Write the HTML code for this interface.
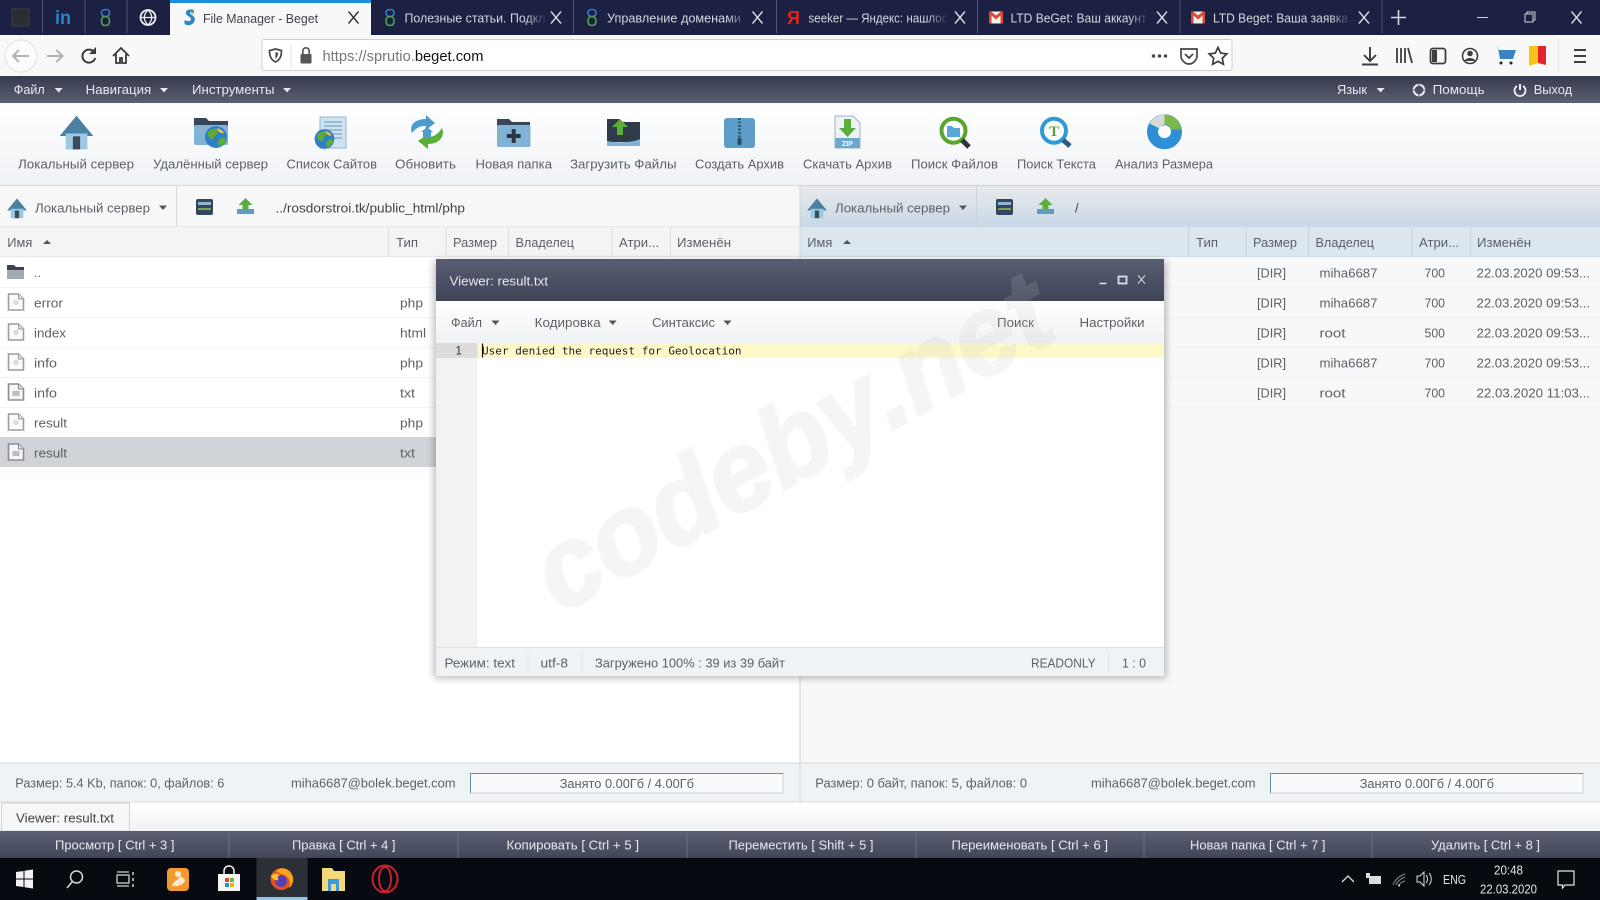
<!DOCTYPE html>
<html><head><meta charset="utf-8"><title>File Manager - Beget</title>
<style>
html,body{margin:0;padding:0;background:#fff;width:1600px;height:900px;overflow:hidden}
svg{display:block;filter:blur(.35px)}
text{font-family:"Liberation Sans","DejaVu Sans",sans-serif;font-size:13px;fill:#5d6167}
.tb text,text.tb{fill:#d4d6e0}
.lt{fill:#e8e9ee}
.d{fill:#3f4348}
.m{font-family:"DejaVu Sans Mono","Liberation Mono",monospace;font-size:11px;fill:#222}
</style></head><body>
<svg width="1600" height="900" viewBox="0 0 1600 900" xmlns="http://www.w3.org/2000/svg">
<defs>
<linearGradient id="menu" x1="0" y1="0" x2="0" y2="1"><stop offset="0" stop-color="#353a4e"/><stop offset="1" stop-color="#5a5f74"/></linearGradient>
<linearGradient id="title" x1="0" y1="0" x2="0" y2="1"><stop offset="0" stop-color="#585e73"/><stop offset="1" stop-color="#3f4457"/></linearGradient>
<linearGradient id="tool" x1="0" y1="0" x2="0" y2="1"><stop offset="0" stop-color="#fff"/><stop offset="1" stop-color="#eff2f5"/></linearGradient>
<linearGradient id="rhead" x1="0" y1="0" x2="0" y2="1"><stop offset="0" stop-color="#e9eaec"/><stop offset="1" stop-color="#c8d8e7"/></linearGradient>
<linearGradient id="fk" x1="0" y1="0" x2="0" y2="1"><stop offset="0" stop-color="#5a5f74"/><stop offset="1" stop-color="#41465a"/></linearGradient>
<linearGradient id="fade" x1="0" y1="0" x2="1" y2="0"><stop offset="0" stop-color="#1c2042" stop-opacity="0"/><stop offset="1" stop-color="#1c2042"/></linearGradient>
<filter id="sh" x="-5%" y="-5%" width="110%" height="110%"><feGaussianBlur stdDeviation="4"/></filter>
<g id="php"><path d="M0 0h10l5 5v11H0z" fill="#fafafa" stroke="#9a9da6" stroke-width="1.6"/><path d="M10 0v5h5" fill="#ddd" stroke="#9a9da6"/><path d="M5.5 8.5l2-2 2 2-2 2z" fill="none" stroke="#c5c8cd" stroke-width="1.2"/></g>
<g id="txt"><path d="M0 0h10l5 5v11H0z" fill="#f6f6f6" stroke="#8a8d96" stroke-width="1.6"/><path d="M10 0v5h5" fill="#ddd" stroke="#8a8d96"/><rect x="4" y="7" width="7" height="5" fill="#b9bcc3"/></g>
<g id="house"><path d="M-10 2L0-10 10 2z" fill="#4a80a0" stroke="#4a80a0" stroke-width="1.5"/><rect x="-7.5" y="1" width="15" height="11" fill="#9cc9e2"/><rect x="-2.5" y="3" width="5" height="9" fill="#3c4a5c"/></g>
<g id="x"><path d="M-5-6L5 6M5-6L-5 6" stroke-width="1.4" fill="none"/></g>
<g id="gm"><rect x="-7" y="-6" width="14" height="12" fill="#f5f0ec"/><path d="M-7-6V6h2.5V-2L0 2 4.5-2V6H7V-6H5L0-2-5-6z" fill="#d94a38"/></g>
<g id="s8"><path d="M0-1C-3-1-4-3-4-5S-3-8 0-8 4-7 4-5 3-1 0-1z" fill="none" stroke="#2f7fd0" stroke-width="1.6"/><path d="M0-1C3-1 4 1 4 3.5S3 8 0 8-4 6-4 3.5-3-1 0-1z" fill="none" stroke="#4aa845" stroke-width="1.6"/></g>
<g id="gb"><circle r="11" fill="#2f7fc6"/><path d="M-8-5C-4-9 0-9 2-7 3-3-2-2-2 2-5 3-9 0-8-5zM3 2C6 0 9 0 10 2 9 7 5 9 3 9 1 6 2 4 3 2z" fill="#5fa83c"/><path d="M1-9C4-8 7-6 8-4 5-3 2-5 1-9z" fill="#e8c93c"/></g>
<g id="car"><path d="M-4-2L0 2.5 4-2z"/></g>
</defs>

<!-- firefox tabs -->
<rect width="1600" height="35" fill="#1c2042"/>
<g stroke="#50546e" stroke-width="1"><path d="M42.5 0v33M85 0v33M127 0v33M573.5 0v33M776.5 0v33M977.5 0v33M1180 0v33M1382 0v33"/></g>
<rect x="12" y="9" width="17" height="17" fill="#2b2d33" stroke="#3b3d40"/>
<text x="55" y="24" style="font-size:19px;font-weight:bold;fill:#2a85c4" textLength="16" lengthAdjust="spacingAndGlyphs">in</text>
<use href="#s8" x="105.5" y="17.5"/>
<circle cx="148" cy="17.5" r="7.5" fill="none" stroke="#eee" stroke-width="1.8"/><path d="M140.5 17.5h15M148 10c-5 5-5 10 0 15M148 10c5 5 5 10 0 15" stroke="#eee" fill="none" stroke-width="1.3"/>
<rect x="170" y="0" width="201" height="35" fill="#f8f8f9"/><rect x="170" y="0" width="201" height="3" fill="#1e8fe0"/>
<path d="M194 10c-6-2-9 1-8 4 1 2 5 3 5 5s-3 3-6 1c-2 4 1 6 5 5 4-1 6-5 4-8-1-2-4-3-4-4s2-2 4 0z" fill="#2f86c6"/><path d="M194 10l-4 2 4 2z" fill="#6cb33f"/>
<text x="203" y="23" class="d" textLength="115" lengthAdjust="spacingAndGlyphs">File Manager - Beget</text>
<use href="#x" x="353.5" y="17.5" stroke="#333"/>
<g stroke="#d8dae2">
<use href="#s8" x="390" y="17.5" stroke="none"/>
<text x="404.5" y="22.5" class="tb" style="fill:#d4d6e0" textLength="141" lengthAdjust="spacingAndGlyphs" stroke="none">Полезные статьи. Подкл</text>
<rect x="526" y="5" width="21" height="26" fill="url(#fade)" stroke="none"/>
<use href="#x" x="556" y="17.5"/>
<use href="#s8" x="592" y="17.5" stroke="none"/>
<text x="607" y="22.5" class="tb" style="fill:#d4d6e0" textLength="134" lengthAdjust="spacingAndGlyphs" stroke="none">Управление доменами</text>
<rect x="728" y="5" width="19" height="26" fill="url(#fade)" stroke="none"/>
<use href="#x" x="757.5" y="17.5"/>
<text x="787" y="24" style="font-size:18px;fill:#e0241c;font-weight:bold" stroke="none">Я</text>
<text x="808.5" y="22.5" style="fill:#d4d6e0" textLength="139" lengthAdjust="spacingAndGlyphs" stroke="none">seeker — Яндекс: нашлос</text>
<rect x="928" y="5" width="21" height="26" fill="url(#fade)" stroke="none"/>
<use href="#x" x="960" y="17.5"/>
<use href="#gm" x="996" y="17.5" stroke="none"/>
<text x="1010.5" y="22.5" style="fill:#d4d6e0" textLength="136" lengthAdjust="spacingAndGlyphs" stroke="none">LTD BeGet: Ваш аккаунт</text>
<rect x="1129" y="5" width="20" height="26" fill="url(#fade)" stroke="none"/>
<use href="#x" x="1162" y="17.5"/>
<use href="#gm" x="1198" y="17.5" stroke="none"/>
<text x="1213" y="22.5" style="fill:#d4d6e0" textLength="135" lengthAdjust="spacingAndGlyphs" stroke="none">LTD Beget: Ваша заявка</text>
<rect x="1331" y="5" width="20" height="26" fill="url(#fade)" stroke="none"/>
<use href="#x" x="1364" y="17.5"/>
</g>
<path d="M1391 17.5h15M1398.5 10v15" stroke="#d8dae2" stroke-width="1.6"/>
<path d="M1477 17.5h11" stroke="#cfd1da" stroke-width="1"/>
<path d="M1525 14h8v8h-8zM1527 14v-2h8v8h-2" fill="none" stroke="#cfd1da"/>
<use href="#x" x="1576.5" y="17.5" stroke="#d8dae2"/>

<!-- firefox toolbar -->
<rect y="35" width="1600" height="41" fill="#f8f8f9"/>
<circle cx="21" cy="56" r="16" fill="#fbfbfb" stroke="#e0e0e2"/>
<path d="M29 56H13M19 50l-6 6 6 6" fill="none" stroke="#b0b1b5" stroke-width="2"/>
<path d="M47 56h15M56.5 50l6 6-6 6" fill="none" stroke="#b0b1b5" stroke-width="2"/>
<path d="M94 52a6.5 6.5 0 1 0 1.2 6" fill="none" stroke="#3a3a3f" stroke-width="2"/><path d="M96 47v7h-7z" fill="#3a3a3f"/>
<path d="M113 56l8-8 8 8M116 54v9h4v-5h2v5h4v-9" fill="none" stroke="#3a3a3f" stroke-width="1.8"/>
<rect x="262" y="39.5" width="970" height="31" rx="2" fill="#fff" stroke="#cfcfd2"/>
<path d="M275.5 49l6 1.5c0 5-1 9-6 11.5-5-2.5-6-6.5-6-11.5z" fill="none" stroke="#45454a" stroke-width="1.7"/><path d="M275.5 52l2.500.7c0 3-1 5-2.500 6z" fill="#45454a"/>
<path d="M291 44v24" stroke="#e0e0e2"/>
<rect x="300.5" y="54" width="11" height="9.5" rx="1" fill="#55555a"/><path d="M302.8 54v-3a3.2 3.2 0 0 1 6.4 0v3" fill="none" stroke="#55555a" stroke-width="1.7"/>
<text x="322.5" y="61" style="font-size:14.5px;fill:#76767c" textLength="161" lengthAdjust="spacingAndGlyphs">https://sprutio.<tspan style="fill:#111">beget.com</tspan></text>
<g fill="#4a4a50"><circle cx="1153.5" cy="56" r="1.8"/><circle cx="1159.5" cy="56" r="1.8"/><circle cx="1165.5" cy="56" r="1.8"/></g>
<path d="M1181 49h16v7c0 4-4 8-8 8s-8-4-8-8z" fill="none" stroke="#45454a" stroke-width="1.7"/><path d="M1185 54l4 4 4-4" fill="none" stroke="#45454a" stroke-width="1.8"/>
<path d="M1218 47.5l2.7 5.6 6.1.8-4.500 4.300 1.100 6.100-5.400-2.900-5.400 2.900 1.100-6.100-4.500-4.300 6.100-.8z" fill="none" stroke="#3d3d42" stroke-width="1.7"/>
<path d="M1370 47v14M1364 55l6 6 6-6M1362 64.5h16" fill="none" stroke="#3d3d42" stroke-width="1.9"/>
<path d="M1397 48v15M1401 48v15M1405 48v15M1408 48l4 15" fill="none" stroke="#3d3d42" stroke-width="1.8"/>
<rect x="1430.5" y="48.5" width="15" height="15" rx="2.5" fill="none" stroke="#3d3d42" stroke-width="1.8"/><rect x="1432" y="50" width="5" height="12" fill="#3d3d42"/>
<circle cx="1470" cy="56" r="7.5" fill="none" stroke="#3d3d42" stroke-width="1.6"/><circle cx="1470" cy="53.5" r="2.8" fill="#3d3d42"/><path d="M1464.5 61c2-4 9-4 11 0z" fill="#3d3d42"/>
<path d="M1496 46l2 2 2 11h13l3-9h-17" fill="#3b83c4"/><circle cx="1501" cy="63" r="1.5" fill="#222"/><circle cx="1511" cy="63" r="1.5" fill="#222"/>
<path d="M1529 46h9v17l-9 3z" fill="#f5c518"/><path d="M1538 46h8v19l-8-2z" fill="#e0262c"/>
<path d="M1558.7 39v33" stroke="#e6e6e8"/>
<path d="M1574 50h12M1574 56h12M1574 62h12" stroke="#3d3d42" stroke-width="2"/>

<!-- app menu -->
<rect y="76" width="1600" height="27" fill="url(#menu)"/>
<g fill="#e6e7ec">
<text x="13.8" y="94" class="lt" textLength="31" lengthAdjust="spacingAndGlyphs">Файл</text><use href="#car" x="58.7" y="90"/>
<text x="85.7" y="94" class="lt" textLength="65.5" lengthAdjust="spacingAndGlyphs">Навигация</text><use href="#car" x="164" y="90"/>
<text x="192" y="94" class="lt" textLength="82.5" lengthAdjust="spacingAndGlyphs">Инструменты</text><use href="#car" x="287" y="90"/>
<text x="1337" y="94" class="lt" textLength="30" lengthAdjust="spacingAndGlyphs">Язык</text><use href="#car" x="1380.6" y="90"/>
<text x="1432.6" y="94" class="lt" textLength="52" lengthAdjust="spacingAndGlyphs">Помощь</text>
<text x="1533.7" y="94" class="lt" textLength="38.5" lengthAdjust="spacingAndGlyphs">Выход</text>
</g>
<circle cx="1419" cy="90" r="5.3" fill="none" stroke="#eceef2" stroke-width="2"/><path d="M1419 84v12M1413 90h12" stroke="#50556a" stroke-width="1"/>
<path d="M1517 86a5.5 5.5 0 1 0 6 0" fill="none" stroke="#f0f1f4" stroke-width="1.8"/><path d="M1520 84v6" stroke="#f0f1f4" stroke-width="2"/>

<!-- tool area -->
<rect y="103" width="1600" height="82" fill="url(#tool)"/>
<g class="tbar">
<use href="#house" transform="translate(76.5,132) scale(1.45)"/>
<text x="18" y="168.5" textLength="116" lengthAdjust="spacingAndGlyphs">Локальный сервер</text>
<!-- remote -->
<path d="M194 118h12l3 3h19v16h-34z" fill="#3a4658"/><rect x="194" y="125" width="34" height="20" rx="2" fill="#82b3d6"/><use href="#gb" transform="translate(216,137)"/>
<text x="153" y="168.5" textLength="115" lengthAdjust="spacingAndGlyphs">Удалённый сервер</text>
<!-- list -->
<rect x="320" y="117" width="26" height="31" fill="#cfe2ef" stroke="#8fb6d0"/><path d="M324 122h18M324 126h18M324 130h18M324 134h18M324 138h18" stroke="#88aec8" stroke-width="1.6"/><use href="#gb" transform="translate(324.5,139) scale(.9)"/>
<text x="286.5" y="168.5" textLength="90.5" lengthAdjust="spacingAndGlyphs">Список Сайтов</text>
<!-- refresh -->
<path d="M412 133c-3-7 2-14 14-14v-4l9 8-9 7v-4c-6 0-9 1-14 7z" fill="#4e9ccf"/><path d="M442 128c3 8-2 16-14 16v5l-10-8 10-7v3c6 0 10-3 14-9z" fill="#5cae3c"/><path d="M427 127l6 5h-2v5h-8v-5h-2z" fill="#4e9ccf"/>
<text x="395" y="168.5" textLength="61" lengthAdjust="spacingAndGlyphs">Обновить</text>
<!-- new folder -->
<path d="M497 119h12l3 3h18v12h-33z" fill="#3a4658"/><rect x="497" y="125" width="33.5" height="22" rx="2" fill="#82b3d6"/><path d="M513.7 129v14M506.7 136h14" stroke="#2c3746" stroke-width="4"/>
<text x="475.5" y="168.5" textLength="76.5" lengthAdjust="spacingAndGlyphs">Новая папка</text>
<!-- upload -->
<path d="M607 119h12l3 3h18v20h-33z" fill="#2f3a4a"/><path d="M607 141c8 2 25 2 33-2v7h-33z" fill="#82b3d6"/><path d="M617 135v-8h-5l8-8 8 8h-5v8z" fill="#5cae3c"/>
<text x="570" y="168.5" textLength="106.5" lengthAdjust="spacingAndGlyphs">Загрузить Файлы</text>
<!-- archive -->
<rect x="724" y="118" width="31" height="30" rx="3" fill="#5d9dc8"/><path d="M739.5 118v24" stroke="#2d5e80" stroke-width="3" stroke-dasharray="2 1.5"/><rect x="737.5" y="138" width="4" height="7" rx="1.5" fill="#2d4a60"/>
<text x="695" y="168.5" textLength="89" lengthAdjust="spacingAndGlyphs">Создать Архив</text>
<!-- zip -->
<path d="M835 116h18l7 7v25h-25z" fill="#eef2f4" stroke="#9db4c4"/><rect x="835.5" y="138" width="24" height="10" fill="#6da7cc"/><path d="M844 119h7v9h5l-8.5 9-8.5-9h5z" fill="#5cae3c"/>
<text x="842" y="146" style="font-size:7px;font-weight:bold;fill:#fff">ZIP</text>
<text x="803" y="168.5" textLength="89" lengthAdjust="spacingAndGlyphs">Скачать Архив</text>
<!-- search files -->
<circle cx="953.5" cy="130.7" r="12" fill="#fff" stroke="#5aa531" stroke-width="4"/><path d="M962 140l7 7" stroke="#2c3440" stroke-width="5"/><path d="M947 126h5l2 2h6v9h-13z" fill="#58a8dc"/>
<text x="911" y="168.5" textLength="87" lengthAdjust="spacingAndGlyphs">Поиск Файлов</text>
<!-- search text -->
<circle cx="1054" cy="130.7" r="12" fill="#fff" stroke="#2f9ad8" stroke-width="4"/><path d="M1063 140l7 6" stroke="#345a80" stroke-width="5"/><text x="1049" y="136" style="font-size:15px;font-weight:bold;fill:#5aa531;font-family:'Liberation Serif',serif">T</text>
<text x="1017" y="168.5" textLength="79" lengthAdjust="spacingAndGlyphs">Поиск Текста</text>
<!-- pie -->
<circle cx="1164.5" cy="131.7" r="12" fill="none" stroke="#2f8fd6" stroke-width="11"/><path d="M1164.5 114.5a17.2 17.2 0 0 1 17 15h-11a6 6 0 0 0-6-5z" fill="#7cb84a"/><path d="M1164.5 114.5a17.2 17.2 0 0 0-15 9l10 5a6 6 0 0 1 5-4z" fill="#d8d8d8"/>
<text x="1115" y="168.5" textLength="98" lengthAdjust="spacingAndGlyphs">Анализ Размера</text>
</g>

<!-- left panel -->
<rect y="185" width="800" height="42" fill="#f7f7f7"/>
<path d="M0 185.500h800M176.500 185v42M0 227h800" stroke="#d9d9d9"/>
<use href="#house" transform="translate(17,208) scale(.85)"/>
<text x="35" y="212.5" textLength="115" lengthAdjust="spacingAndGlyphs">Локальный сервер</text><use href="#car" x="163" y="207.5" fill="#555"/>
<g id="drv"><rect x="196" y="199" width="17" height="16" rx="2" fill="#33465c"/><rect x="198" y="202" width="13" height="3" fill="#8fb6d4"/><rect x="198" y="208" width="13" height="2" fill="#7c9f5a"/></g>
<g id="upl"><path d="M237 214v-5h17v5z" fill="#5f9dc4"/><path d="M242.5 209v-4h-4l7-7 7 7h-4v4z" fill="#5cae3c"/></g>
<text x="275.5" y="212.5" class="d" textLength="189.5" lengthAdjust="spacingAndGlyphs">../rosdorstroi.tk/public_html/php</text>
<rect y="227" width="800" height="30" fill="#f4f4f4"/>
<path d="M0 257h800M388.500 227v30M446 227v30M508.500 227v30M612 227v30M670.500 227v30" stroke="#dedede"/>
<text x="7.3" y="247" textLength="25" lengthAdjust="spacingAndGlyphs">Имя</text><path d="M43 244l4-4 4 4z" fill="#555"/>
<text x="396" y="247" textLength="22" lengthAdjust="spacingAndGlyphs">Тип</text>
<text x="453" y="247" textLength="44" lengthAdjust="spacingAndGlyphs">Размер</text>
<text x="515.5" y="247" textLength="58.5" lengthAdjust="spacingAndGlyphs">Владелец</text>
<text x="619" y="247" textLength="40" lengthAdjust="spacingAndGlyphs">Атри...</text>
<text x="677" y="247" textLength="54" lengthAdjust="spacingAndGlyphs">Изменён</text>
<rect y="257" width="800" height="506" fill="#fff"/>
<rect y="437" width="800" height="30" fill="#d0d3d8"/>
<path d="M0 287.500h800M0 317.500h800M0 347.500h800M0 377.500h800M0 407.500h800" stroke="#f3f3f3"/>
<path d="M7 265h7l2 2h8v12H7z" fill="#3d4352"/><rect x="7" y="270" width="17" height="9" fill="#a4a9b4"/>
<text x="34" y="277" textLength="7" lengthAdjust="spacingAndGlyphs">..</text>
<use href="#php" x="8.5" y="294"/><text x="34" y="307.5" textLength="29" lengthAdjust="spacingAndGlyphs">error</text><text x="400" y="307.5" textLength="23" lengthAdjust="spacingAndGlyphs">php</text>
<use href="#php" x="8.5" y="324"/><text x="34" y="337.5" textLength="32" lengthAdjust="spacingAndGlyphs">index</text><text x="400" y="337.5" textLength="26" lengthAdjust="spacingAndGlyphs">html</text>
<use href="#php" x="8.5" y="354"/><text x="34" y="367.5" textLength="23" lengthAdjust="spacingAndGlyphs">info</text><text x="400" y="367.5" textLength="23" lengthAdjust="spacingAndGlyphs">php</text>
<use href="#txt" x="8.5" y="384"/><text x="34" y="397.5" textLength="23" lengthAdjust="spacingAndGlyphs">info</text><text x="400" y="397.5" textLength="15" lengthAdjust="spacingAndGlyphs">txt</text>
<use href="#php" x="8.5" y="414"/><text x="34" y="427.5" textLength="33" lengthAdjust="spacingAndGlyphs">result</text><text x="400" y="427.5" textLength="23" lengthAdjust="spacingAndGlyphs">php</text>
<use href="#txt" x="8.5" y="444"/><text x="34" y="457.5" textLength="33" lengthAdjust="spacingAndGlyphs">result</text><text x="400" y="457.5" textLength="15" lengthAdjust="spacingAndGlyphs">txt</text>

<!-- right panel -->
<rect x="800" y="185" width="800" height="42" fill="url(#rhead)"/>
<path d="M800 185.500h800M976.500 185v42" stroke="#cdd2d6"/>
<use href="#house" transform="translate(817,208) scale(.85)"/>
<text x="835" y="212.5" textLength="115" lengthAdjust="spacingAndGlyphs">Локальный сервер</text><use href="#car" x="963" y="207.5" fill="#555"/>
<use href="#drv" x="800"/><use href="#upl" x="800"/>
<text x="1075" y="212.5" class="d">/</text>
<rect x="800" y="227" width="800" height="30" fill="#dce6ef"/>
<path d="M800 257h800M1188.500 227v30M1246 227v30M1308.500 227v30M1412 227v30M1470.500 227v30" stroke="#c9d3db"/>
<text x="807.3" y="247" textLength="25" lengthAdjust="spacingAndGlyphs">Имя</text><path d="M843 244l4-4 4 4z" fill="#555"/>
<text x="1196" y="247" textLength="22" lengthAdjust="spacingAndGlyphs">Тип</text>
<text x="1253" y="247" textLength="44" lengthAdjust="spacingAndGlyphs">Размер</text>
<text x="1315.5" y="247" textLength="58.5" lengthAdjust="spacingAndGlyphs">Владелец</text>
<text x="1419" y="247" textLength="40" lengthAdjust="spacingAndGlyphs">Атри...</text>
<text x="1477" y="247" textLength="54" lengthAdjust="spacingAndGlyphs">Изменён</text>
<rect x="800" y="257" width="800" height="506" fill="#f6f8fa"/>
<path d="M800 287.500h800M800 317.500h800M800 347.500h800M800 377.500h800M800 407.500h800" stroke="#f1f3f5"/>
<path d="M800 185v617" stroke="#cfd2d6"/>
<g>
<text x="1257" y="277.5" textLength="29" lengthAdjust="spacingAndGlyphs">[DIR]</text><text x="1319.5" y="277.5" textLength="58" lengthAdjust="spacingAndGlyphs">miha6687</text><text x="1424.5" y="277.5" textLength="20.5" lengthAdjust="spacingAndGlyphs">700</text><text x="1476.5" y="277.5" textLength="113.5" lengthAdjust="spacingAndGlyphs">22.03.2020 09:53...</text>
<text x="1257" y="307.5" textLength="29" lengthAdjust="spacingAndGlyphs">[DIR]</text><text x="1319.5" y="307.5" textLength="58" lengthAdjust="spacingAndGlyphs">miha6687</text><text x="1424.5" y="307.5" textLength="20.5" lengthAdjust="spacingAndGlyphs">700</text><text x="1476.5" y="307.5" textLength="113.5" lengthAdjust="spacingAndGlyphs">22.03.2020 09:53...</text>
<text x="1257" y="337.5" textLength="29" lengthAdjust="spacingAndGlyphs">[DIR]</text><text x="1319.5" y="337.5" textLength="26" lengthAdjust="spacingAndGlyphs">root</text><text x="1424.5" y="337.5" textLength="20.5" lengthAdjust="spacingAndGlyphs">500</text><text x="1476.5" y="337.5" textLength="113.5" lengthAdjust="spacingAndGlyphs">22.03.2020 09:53...</text>
<text x="1257" y="367.5" textLength="29" lengthAdjust="spacingAndGlyphs">[DIR]</text><text x="1319.5" y="367.5" textLength="58" lengthAdjust="spacingAndGlyphs">miha6687</text><text x="1424.5" y="367.5" textLength="20.5" lengthAdjust="spacingAndGlyphs">700</text><text x="1476.5" y="367.5" textLength="113.5" lengthAdjust="spacingAndGlyphs">22.03.2020 09:53...</text>
<text x="1257" y="397.5" textLength="29" lengthAdjust="spacingAndGlyphs">[DIR]</text><text x="1319.5" y="397.5" textLength="26" lengthAdjust="spacingAndGlyphs">root</text><text x="1424.5" y="397.5" textLength="20.5" lengthAdjust="spacingAndGlyphs">700</text><text x="1476.5" y="397.5" textLength="113.5" lengthAdjust="spacingAndGlyphs">22.03.2020 11:03...</text>
</g>

<!-- status rows -->
<rect y="763" width="1600" height="39" fill="#f0f3f5"/>
<path d="M0 763h1600M0 802h1600M800 763v39" stroke="#d8dbde"/>
<text x="15.3" y="787.5" textLength="209" lengthAdjust="spacingAndGlyphs">Размер: 5.4 Kb, папок: 0, файлов: 6</text>
<text x="291" y="787.5" textLength="164.5" lengthAdjust="spacingAndGlyphs">miha6687@bolek.beget.com</text>
<rect x="470.5" y="773.5" width="312.5" height="19.5" fill="#f8fafb" stroke="#c7d3dc"/><path d="M470 773.500h313M470.500 773v20" stroke="#5e8fb5"/>
<text x="559.7" y="788" textLength="134.3" lengthAdjust="spacingAndGlyphs">Занято 0.00Гб / 4.00Гб</text>
<text x="815.3" y="787.5" textLength="211.7" lengthAdjust="spacingAndGlyphs">Размер: 0 байт, папок: 5, файлов: 0</text>
<text x="1091" y="787.5" textLength="164.5" lengthAdjust="spacingAndGlyphs">miha6687@bolek.beget.com</text>
<rect x="1270.5" y="773.5" width="312.5" height="19.5" fill="#f8fafb" stroke="#c7d3dc"/><path d="M1270 773.500h313M1270.500 773v20" stroke="#5e8fb5"/>
<text x="1359.7" y="788" textLength="134.3" lengthAdjust="spacingAndGlyphs">Занято 0.00Гб / 4.00Гб</text>

<!-- window tabs bar -->
<rect y="803" width="1600" height="28" fill="url(#tool)"/>
<rect x="1.5" y="803" width="128" height="28" fill="#f5f6f7" stroke="#d2d4d6"/>
<text x="16" y="822.5" class="d" textLength="98" lengthAdjust="spacingAndGlyphs">Viewer: result.txt</text>

<!-- function keys -->
<rect y="831" width="1600" height="27" fill="url(#fk)"/>
<path d="M229 832v26M458 832v26M687 832v26M916 832v26M1144 832v26M1372 832v26" stroke="#6a6f82"/>
<text x="55" y="849.5" class="lt" textLength="119.5" lengthAdjust="spacingAndGlyphs">Просмотр [ Ctrl + 3 ]</text>
<text x="292" y="849.5" class="lt" textLength="103.5" lengthAdjust="spacingAndGlyphs">Правка [ Ctrl + 4 ]</text>
<text x="506.5" y="849.5" class="lt" textLength="132.5" lengthAdjust="spacingAndGlyphs">Копировать [ Ctrl + 5 ]</text>
<text x="728.5" y="849.5" class="lt" textLength="145" lengthAdjust="spacingAndGlyphs">Переместить [ Shift + 5 ]</text>
<text x="951.5" y="849.5" class="lt" textLength="156.5" lengthAdjust="spacingAndGlyphs">Переименовать [ Ctrl + 6 ]</text>
<text x="1190" y="849.5" class="lt" textLength="135.5" lengthAdjust="spacingAndGlyphs">Новая папка [ Ctrl + 7 ]</text>
<text x="1431" y="849.5" class="lt" textLength="109" lengthAdjust="spacingAndGlyphs">Удалить [ Ctrl + 8 ]</text>

<!-- taskbar -->
<rect y="858" width="1600" height="42" fill="#070b11"/>
<path d="M16 872l7.5-1v7.5H16zM24.5 870.8L33 869.5v9h-8.5zM16 879.5h7.5v7.5L16 886zM24.5 879.5H33v9l-8.5-1.2z" fill="#f2f2f2"/>
<circle cx="76.5" cy="877" r="6" fill="none" stroke="#d8d8d8" stroke-width="1.5"/><path d="M72 882l-5 6" stroke="#d8d8d8" stroke-width="1.5"/>
<path d="M117 872h12M117 886h12" stroke="#cfcfcf" stroke-width="1.3"/><rect x="117" y="875" width="12" height="8" fill="none" stroke="#cfcfcf" stroke-width="1.3"/><path d="M133 872v3M133 878v3M133 884v3" stroke="#cfcfcf" stroke-width="1.5"/>
<rect x="167" y="868" width="22" height="23" rx="4" fill="#f29a2e"/><path d="M172 886c2-6 6-5 8-10 2 2 5 2 5 5-2 4-8 6-13 5z" fill="#fbe8d0"/><circle cx="178" cy="874" r="3" fill="#fbe8d0"/>
<path d="M218 874h22v17h-22z" fill="#f5f5f5"/><path d="M224 874v-3a5 5 0 0 1 10 0v3" fill="none" stroke="#f5f5f5" stroke-width="1.5"/><rect x="225" y="878" width="4" height="4" fill="#e0482c"/><rect x="230" y="878" width="4" height="4" fill="#72b62c"/><rect x="225" y="883" width="4" height="4" fill="#1f9ad6"/><rect x="230" y="883" width="4" height="4" fill="#f5b400"/>
<rect x="256.5" y="858" width="51" height="42" fill="#2b2f36"/><rect x="256.5" y="897" width="51" height="3" fill="#8ec5ea"/>
<circle cx="281.5" cy="879" r="11" fill="#e8501f"/><circle cx="281" cy="881" r="6" fill="#5a3fb0"/><path d="M276 871c6-5 14-3 17 6 1 4-1 9-4 11 2-5 0-10-3-12-2-2-6-2-10-5z" fill="#f7a51f"/><path d="M271 876c3-3 6-3 9-1-3 1-3 4-1 5-4 1-7-1-8-4z" fill="#f7c72c"/>
<path d="M322 868h10l2 3h11v20h-23z" fill="#f5d77c"/><rect x="328" y="879" width="11" height="12" fill="#3a9bdc"/><rect x="331" y="884" width="5" height="7" fill="#f5d77c"/>
<ellipse cx="385" cy="879" rx="12.5" ry="13.5" fill="none" stroke="#c8202c" stroke-width="2"/><ellipse cx="385" cy="879" rx="6" ry="12" fill="none" stroke="#c8202c" stroke-width="2"/>
<path d="M1342 882l6-6 6 6" fill="none" stroke="#dcdcdc" stroke-width="1.3"/>
<rect x="1369" y="876" width="12" height="8" fill="#dcdcdc"/><rect x="1366" y="873" width="4" height="5" fill="#dcdcdc"/>
<path d="M1393 885c2-5 6-9 12-11M1396 885c1-3 4-6 9-8M1399 885c1-2 3-3 6-4" fill="none" stroke="#8a8c90"/><circle cx="1399" cy="885.5" r="1" fill="#ddd"/>
<path d="M1417 876h3l4-4v14l-4-4h-3z" fill="none" stroke="#dcdcdc"/><path d="M1426 875c2 2 2 6 0 8M1429 873c3 3 3 9 0 12" fill="none" stroke="#dcdcdc"/>
<text x="1443" y="884" style="fill:#e2e2e2" textLength="23" lengthAdjust="spacingAndGlyphs">ENG</text>
<text x="1494" y="874.5" style="fill:#e2e2e2" textLength="29" lengthAdjust="spacingAndGlyphs">20:48</text>
<text x="1480" y="893.5" style="fill:#e2e2e2" textLength="57" lengthAdjust="spacingAndGlyphs">22.03.2020</text>
<path d="M1558 871h16v14h-9l-2.5 3v-3H1558z" fill="none" stroke="#e2e2e2" stroke-width="1.2"/>

<!-- modal viewer -->
<rect x="434" y="261" width="732" height="417" fill="#000" opacity=".28" filter="url(#sh)"/>
<rect x="436" y="259" width="728" height="417" fill="#fff"/>
<rect x="436" y="259" width="728" height="42" fill="url(#title)"/>
<text x="449.5" y="285.5" class="lt" textLength="98.5" lengthAdjust="spacingAndGlyphs">Viewer: result.txt</text>
<path d="M1099.5 283.500h7" stroke="#dfe0e6" stroke-width="1.5"/><rect x="1118.5" y="276.5" width="8" height="7" fill="none" stroke="#dfe0e6" stroke-width="1.8"/><g stroke="#dfe0e6"><use href="#x" transform="translate(1141.5,279.5) scale(.7)"/></g>
<rect x="436" y="301" width="728" height="42" fill="url(#tool)"/>
<g fill="#555">
<text x="451" y="327" textLength="31" lengthAdjust="spacingAndGlyphs">Файл</text><use href="#car" x="495.5" y="322.5"/>
<text x="534.7" y="327" textLength="66" lengthAdjust="spacingAndGlyphs">Кодировка</text><use href="#car" x="612.7" y="322.5"/>
<text x="652" y="327" textLength="63" lengthAdjust="spacingAndGlyphs">Синтаксис</text><use href="#car" x="727.5" y="322.5"/>
<text x="997" y="327" textLength="37" lengthAdjust="spacingAndGlyphs">Поиск</text>
<text x="1079.5" y="327" textLength="65" lengthAdjust="spacingAndGlyphs">Настройки</text>
</g>
<rect x="436" y="343" width="41.5" height="304" fill="#f1f2f3"/>
<rect x="436" y="343" width="41.5" height="15" fill="#dcdcdc"/>
<rect x="477.5" y="343" width="686.5" height="15" fill="#fdf8c8"/>
<text x="455.5" y="354.5" style="font-size:11.5px;fill:#333">1</text>
<text x="482" y="354.5" class="m" textLength="259.5">User denied the request for Geolocation</text>
<path d="M482.5 343.500v14" stroke="#111" stroke-width="1.2"/>
<rect x="436" y="647" width="728" height="29" fill="#f0f3f5"/><path d="M436 647.500h728M528 652v20M582 652v20M1108.500 652v20" stroke="#dfe2e5"/>
<text x="444.5" y="667.5" textLength="70.5" lengthAdjust="spacingAndGlyphs">Режим: text</text>
<text x="540.5" y="667.5" textLength="27.5" lengthAdjust="spacingAndGlyphs">utf-8</text>
<text x="595" y="667.5" textLength="190" lengthAdjust="spacingAndGlyphs">Загружено 100% : 39 из 39 байт</text>
<text x="1031" y="667.5" textLength="64.5" lengthAdjust="spacingAndGlyphs">READONLY</text>
<text x="1122" y="667.5" textLength="24" lengthAdjust="spacingAndGlyphs">1 : 0</text>
<!-- watermark -->
<text transform="translate(560,614) rotate(-29)" opacity=".16" style="font-size:112px;font-weight:bold;font-style:italic;fill:#c8c8c8;stroke:#c8c8c8;stroke-width:3" textLength="572" lengthAdjust="spacingAndGlyphs">codeby.net</text>
</svg>
</body></html>
